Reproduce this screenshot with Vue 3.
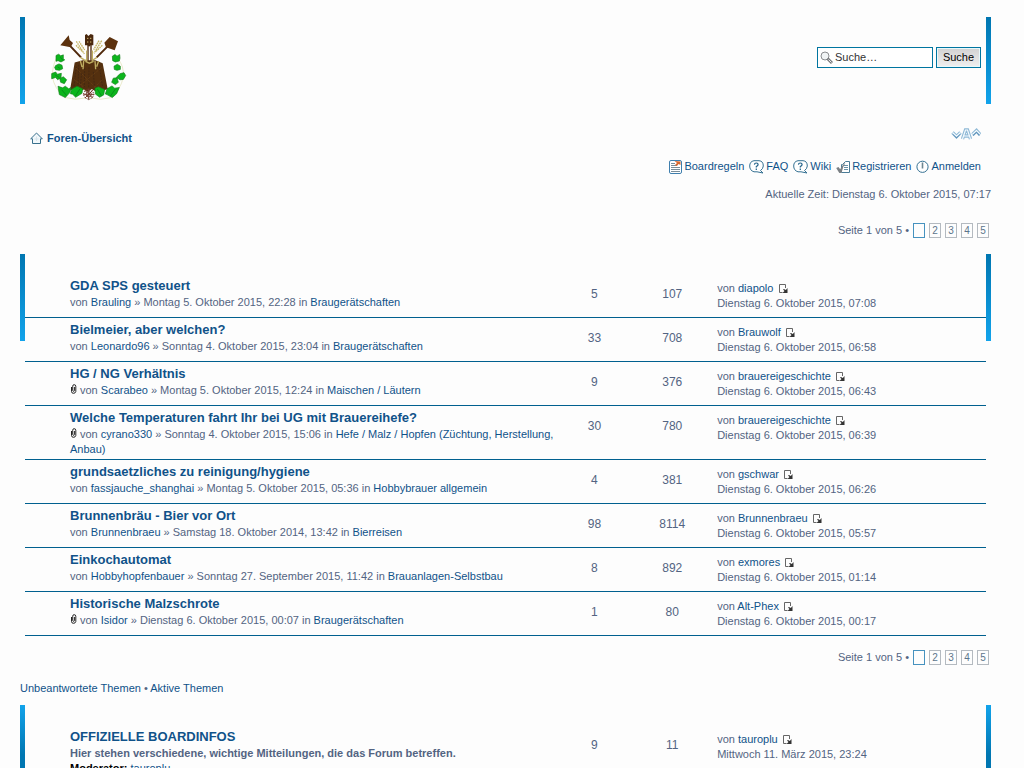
<script setup>
const topics = [
  { title: 'GDA SPS gesteuert', author: 'Brauling', date: 'Montag 5. Oktober 2015, 22:28', forum: 'Braugerätschaften', replies: 5, views: 107, last: 'diapolo', lastDate: 'Dienstag 6. Oktober 2015, 07:08' },
  { title: 'Bielmeier, aber welchen?', author: 'Leonardo96', date: 'Sonntag 4. Oktober 2015, 23:04', forum: 'Braugerätschaften', replies: 33, views: 708, last: 'Brauwolf', lastDate: 'Dienstag 6. Oktober 2015, 06:58' },
  { title: 'HG / NG Verhältnis', clip: true, author: 'Scarabeo', date: 'Montag 5. Oktober 2015, 12:24', forum: 'Maischen / Läutern', replies: 9, views: 376, last: 'brauereigeschichte', lastDate: 'Dienstag 6. Oktober 2015, 06:43' },
  { title: 'Welche Temperaturen fahrt Ihr bei UG mit Brauereihefe?', clip: true, author: 'cyrano330', date: 'Sonntag 4. Oktober 2015, 15:06', forum: 'Hefe / Malz / Hopfen (Züchtung, Herstellung, Anbau)', replies: 30, views: 780, last: 'brauereigeschichte', lastDate: 'Dienstag 6. Oktober 2015, 06:39' },
  { title: 'grundsaetzliches zu reinigung/hygiene', author: 'fassjauche_shanghai', date: 'Montag 5. Oktober 2015, 05:36', forum: 'Hobbybrauer allgemein', replies: 4, views: 381, last: 'gschwar', lastDate: 'Dienstag 6. Oktober 2015, 06:26' },
  { title: 'Brunnenbräu - Bier vor Ort', author: 'Brunnenbraeu', date: 'Samstag 18. Oktober 2014, 13:42', forum: 'Bierreisen', replies: 98, views: 8114, last: 'Brunnenbraeu', lastDate: 'Dienstag 6. Oktober 2015, 05:57' },
  { title: 'Einkochautomat', author: 'Hobbyhopfenbauer', date: 'Sonntag 27. September 2015, 11:42', forum: 'Brauanlagen-Selbstbau', replies: 8, views: 892, last: 'exmores', lastDate: 'Dienstag 6. Oktober 2015, 01:14' },
  { title: 'Historische Malzschrote', clip: true, author: 'Isidor', date: 'Dienstag 6. Oktober 2015, 00:07', forum: 'Braugerätschaften', replies: 1, views: 80, last: 'Alt-Phex', lastDate: 'Dienstag 6. Oktober 2015, 00:17' }
]
const forums = [
  { title: 'OFFIZIELLE BOARDINFOS', text: 'Hier stehen verschiedene, wichtige Mitteilungen, die das Forum betreffen.', moderator: 'tauroplu', topics: 9, posts: 11, last: 'tauroplu', lastDate: 'Mittwoch 11. März 2015, 23:24' }
]
const pages = [2, 3, 4, 5]
</script>

<template>
  <div class="page">
    <header class="banner">
      <a href="#" class="logo" aria-label="Foren-Übersicht">
        <svg width="85" height="75" viewBox="0 0 255 225">
          <path d="M34 85 Q22 108 22 140 Q28 175 58 202 Q90 212 123 204 M218 85 Q238 108 235 142 Q226 180 198 203 Q165 212 138 204" fill="none" stroke="#dfe0b0" stroke-width="2" />
          <g stroke="#50290c" fill="none" stroke-width="6">
            <path d="M66 38 108 82M196 41 155 82" />
            <path d="M129 44V98M138 44V98" stroke-width="4" />
          </g>
          <path d="M46 46 71 16 74 30 84 39 77 52ZM194 21 219 34 209 61 183 52 178 38Z" fill="#5c310d" />
          <path d="M120 46V15L125 12 130 18 137 12 145 15V46H137L132 50 128 46Z" fill="#4a280e" />
          <path d="M126 25h4M135 25h4M126 36h4M135 36h4" stroke="#d4bd74" stroke-width="3" />
          <g stroke="#c4b363" fill="none" stroke-width="4" stroke-dasharray="5 2">
            <path d="M94 34 118 72M102 34 119 60M170 32 147 70M162 32 146 59M93 46 111 64M172 46 153 64" />
          </g>
          <g transform="translate(0 8) scale(1 1.12)">
            <path d="M89 80 113 74 151 74 173 82 188 151 172 156 164 150 154 158 140 151 129 159 117 152 103 157 91 151 75 154Z" fill="#54300f" />
            <path d="M94 91 87 145M101 86 99 148M110 108 105 150M119 95 118 151M132 93 131 151M145 105 149 151M163 91 173 146" fill="none" stroke="#3c2412" stroke-width="2" stroke-dasharray="5 3" />
            <path d="M93 95 151 146M169 94 99 146M87 125 118 147M171 126 146 149" stroke="#754819" stroke-width="2" stroke-dasharray="3 3" />
            <path d="M106 66 118 73 125 74V48M142 48V74L156 66M116 76 114 98M150 76 152 98M106 75 111 92M161 76 155 91M121 77 133 82 146 77" fill="none" stroke="#bfae62" stroke-width="4" />
          </g>
          <g transform="translate(0 28) scale(1 .97)">
            <g fill="#0cb61c" stroke="#147f1b" stroke-width="2">
              <path d="M33 50 41 46 47 51 55 48 55 59 59 64 48 70 39 66 33 68ZM202 52 210 47 216 52 224 47 225 58 223 67 211 70 203 66Z" />
              <path d="M32 81 42 76 51 80 53 91 43 96 32 94 29 87ZM207 83 217 77 226 83 226 93 216 96 208 93Z" />
              <path d="M20 106 32 101 37 108 49 105 48 118 38 125 32 118 20 122ZM44 121 55 116 65 125 58 137 47 133ZM226 106 237 103 242 112 235 124 225 125 214 118 220 111ZM205 120 216 119 220 133 211 140 200 133Z" />
              <path d="M39 145 53 150 61 145 71 153 78 149 75 164 61 180 43 171ZM80 154 96 145 113 153 111 167 92 179 83 170 76 168ZM150 151 160 147 179 155 176 172 164 179 151 169ZM186 153 201 144 209 151 223 149 215 168 202 180 186 171 181 169Z" />
            </g>
            <path d="M46 55 53 64M38 85 46 91M29 109 43 118M50 156 65 174M105 153 91 175M157 154 169 174M211 154 196 176" stroke="#087918" fill="none" stroke-width="2" />
          </g>
          <g fill="none" stroke="#713a2c" stroke-width="3">
            <path d="M120 181 143 204M143 181 120 204M115 193H147M131 177V209" />
            <circle cx="131" cy="193" r="8" />
            <path d="M121 181 131 176 142 182 147 193 142 203 131 209 120 203 115 193Z" stroke-dasharray="4 3" />
          </g>
        </svg>
      </a>
      <form class="search" @submit.prevent>
        <label class="field">
          <svg width="13" height="14" viewBox="0 0 13 14"><circle cx="5" cy="5" r="4" fill="#f1f4f5" stroke="#8b8d90" /><path d="M7.5 7.5 12 12" stroke="#77797c" stroke-width="3" /><path d="M8.5 8.5 11.5 11.5" stroke="#eee" /></svg>
          <input type="text" value="Suche…" aria-label="Suche">
        </label>
        <button type="submit">Suche</button>
      </form>
    </header>

    <div class="crumbs">
      <a href="#" class="home">
        <svg width="13" height="13" viewBox="0 0 13 13"><path d="M6.5 1 12.3 6.8H10.5V11.5H2.5V6.8H.7Z" fill="#f2f8fb" stroke="#39718d" stroke-linejoin="round" /><path d="M6.5 4.5V9M4.5 7h4" stroke="#d4e3eb" /></svg>
        <b>Foren-Übersicht</b>
      </a>
      <a href="#" class="fontsize" aria-label="Schriftgröße ändern">
        <svg width="30" height="14" viewBox="0 0 30 14"><g fill="none"><path d="M1.5 5.5 5.5 9.5 9.5 5.5M21.5 7.5 25.5 3.5 29 7.5M11.5 12 14.5 3H16.5L19.5 12M13 9H18" stroke="#8fb9d6" stroke-width="3.4" /><path d="M2 7 5.5 10.5 9 7M22 8.5 25.5 5 28.5 8.5" stroke="#5e93ba" stroke-width="1.4" /><path d="M1.5 5.5 5.5 9.2 9.5 5.5M21.5 7.2 25.5 3.5 29 7.2M11.5 12 14.5 3H16.5L19.5 12M13 9H18" stroke="#f5fbff" stroke-width="1.2" /></g></svg>
      </a>
    </div>

    <nav class="links">
      <a href="#"><svg width="13" height="14" viewBox="0 0 13 14"><rect x=".5" y=".5" width="12" height="13" rx="1.5" fill="#fff" stroke="#3f7fae" /><path d="M2 3.5h4M2 5.5h6M2 7.5h9M2 9.5h9M2 11.5h9" stroke="#7a8d99" /><path d="m5.5 1 6 .5V5L9.5 4 8 6 6 5l2-2Z" fill="#d9682f" /></svg><span>Boardregeln</span></a>
      <a href="#"><svg width="15" height="14" viewBox="0 0 15 14"><path d="M5 .7h5Q14.3 1 14.3 6 14 9 11.5 10.5L14 13 8 11.8H5Q.7 10.5.7 6T5 .7Z" fill="#fff" stroke="#347092" /><path d="M5.4 4.6Q5.6 3 7.3 3 9.1 3 9.1 4.5 9.1 5.6 7.3 6.6V7.4M7.3 8.5V10" fill="none" stroke="#1f6088" stroke-width="1.2" /></svg><span>FAQ</span></a>
      <a href="#"><svg width="15" height="14" viewBox="0 0 15 14"><path d="M5 .7h5Q14.3 1 14.3 6 14 9 11.5 10.5L14 13 8 11.8H5Q.7 10.5.7 6T5 .7Z" fill="#fff" stroke="#347092" /><path d="M5.4 4.6Q5.6 3 7.3 3 9.1 3 9.1 4.5 9.1 5.6 7.3 6.6V7.4M7.3 8.5V10" fill="none" stroke="#1f6088" stroke-width="1.2" /></svg><span>Wiki</span></a>
      <a href="#"><svg width="14" height="14" viewBox="0 0 14 14"><path d="M6.5 4.5 9.5 1.5H13.5V12.5H5.5V4.5Z" fill="#fff" stroke="#4a7c97" /><path d="M8 5.5h4M8 7.5h4M8 9.5h4" stroke="#6a91a7" /><path d="M.2 8 2.5 7 4.2 9.2Q6 5 9.5 2.5 7 6.5 5.4 13H3.3Z" fill="#7b8084" /></svg><span>Registrieren</span></a>
      <a href="#"><svg width="13" height="14" viewBox="0 0 13 14"><circle cx="6.5" cy="6.8" r="5.6" fill="#fff" stroke="#347092" /><path d="M6.5 2.5V8.5" stroke="#6e8792" stroke-width="1.6" /></svg><span>Anmelden</span></a>
    </nav>

    <p class="time">Aktuelle Zeit: Dienstag 6. Oktober 2015, 07:17</p>

    <div class="pagination top">
      <span>Seite 1 von 5 •</span><b class="current" /><a v-for="p in pages" :key="p" href="#">{{ p }}</a>
    </div>

    <section class="panel">
      <table>
        <colgroup><col><col class="count"><col class="count"><col class="lastpost"></colgroup>
        <tbody>
          <tr v-for="t in topics" :key="t.title">
            <td class="topic">
              <a href="#" class="title">{{ t.title }}</a>
              <p><svg v-if="t.clip" class="clip" width="7" height="10" viewBox="0 0 7 10"><path d="M1.5 3V7.5Q1.5 9.3 3.5 9.3T5.8 7.5V2.3Q5.8.7 4.2.7T2.7 2.3V6.5Q2.8 7.5 3.7 7.3T4.4 6.5V3" fill="none" stroke="#252525" /></svg>von <a href="#">{{ t.author }}</a> » {{ t.date }} in <a href="#">{{ t.forum }}</a></p>
            </td>
            <td class="number">{{ t.replies }}</td>
            <td class="number">{{ t.views }}</td>
            <td class="last">von <a href="#">{{ t.last }}</a> <a href="#" aria-label="Neuester Beitrag"><svg class="goto" width="9" height="9" viewBox="0 0 9 9"><path d="M3.5 8.5H.5V.5H6.5V4" fill="none" stroke="#666" /><path d="M8.5 4V9H3.5L5.5 7 4 5.5 5 5 6.8 6Z" fill="#333" /></svg></a><br>{{ t.lastDate }}</td>
          </tr>
        </tbody>
      </table>
    </section>

    <div class="pagination bottom">
      <span>Seite 1 von 5 •</span><b class="current" /><a v-for="p in pages" :key="p" href="#">{{ p }}</a>
    </div>

    <p class="quick"><a href="#">Unbeantwortete Themen</a> • <a href="#">Aktive Themen</a></p>

    <section class="panel forums">
      <table>
        <colgroup><col><col class="count"><col class="count"><col class="lastpost"></colgroup>
        <tbody>
          <tr v-for="f in forums" :key="f.title">
            <td class="topic">
              <a href="#" class="title">{{ f.title }}</a>
              <p><b>{{ f.text }}</b></p>
              <p><b class="mod">Moderator:</b> <a href="#">{{ f.moderator }}</a></p>
            </td>
            <td class="number">{{ f.topics }}</td>
            <td class="number">{{ f.posts }}</td>
            <td class="last">von <a href="#">{{ f.last }}</a> <a href="#" aria-label="Neuester Beitrag"><svg class="goto" width="9" height="9" viewBox="0 0 9 9"><path d="M3.5 8.5H.5V.5H6.5V4" fill="none" stroke="#666" /><path d="M8.5 4V9H3.5L5.5 7 4 5.5 5 5 6.8 6Z" fill="#333" /></svg></a><br>{{ f.lastDate }}</td>
          </tr>
        </tbody>
      </table>
    </section>
  </div>
</template>

<style>
body {
  background: #fdfdfd;
}
</style>

<style scoped>
.page {
  padding: 17px 33px 0 20px;
  font: 11px/15px "Liberation Sans", Arial, sans-serif;
  color: #536482;
}
a {
  color: #105289;
  text-decoration: none;
}
a:hover {
  text-decoration: underline;
}
p {
  margin: 0;
}
.banner,
.panel {
  background:
    linear-gradient(#0076b1, #12a3eb) left top / 5px 87px no-repeat,
    linear-gradient(#0076b1, #12a3eb) right top / 5px 87px no-repeat;
}
.banner {
  display: flex;
  justify-content: space-between;
  align-items: flex-start;
  height: 87px;
  padding: 0 10px 0 25px;
  box-sizing: border-box;
}
.logo {
  padding-top: 13px;
}
.logo svg,
.links svg,
.home svg,
.fontsize svg {
  display: block;
}
.search {
  display: flex;
  gap: 3px;
  padding-top: 30px;
}
.field {
  display: flex;
  align-items: center;
  gap: 2px;
  width: 116px;
  height: 21px;
  padding: 0 2px;
  box-sizing: border-box;
  border: 1px solid #0075a0;
  background: #fff;
}
.field input {
  flex: 1;
  min-width: 0;
  padding: 0;
  border: 0;
  outline: 0;
  background: none;
  font: inherit;
  color: #333;
}
.search button {
  width: 45px;
  height: 21px;
  padding: 0;
  border: 1px solid #0075a0;
  background: linear-gradient(#d2d2d2, #efefef);
  box-shadow: inset 0 0 0 1px #e8f8fb;
  font: inherit;
  color: #000;
}
.crumbs {
  display: flex;
  justify-content: space-between;
  align-items: flex-start;
  padding: 23px 10px 0;
}
.home {
  display: flex;
  align-items: center;
  gap: 4px;
  padding-top: 4px;
}
.links {
  display: flex;
  justify-content: flex-end;
  gap: 5px;
  padding: 13px 10px 0 0;
}
.links a {
  display: flex;
  align-items: center;
  gap: 2px;
}
.time {
  margin-top: 13px;
  text-align: right;
}
.pagination {
  display: flex;
  justify-content: flex-end;
  align-items: center;
  gap: 4px;
  padding-right: 2px;
}
.pagination.top {
  margin: 21px 0 16px;
}
.pagination.bottom {
  margin: 14px 0 16px;
}
.pagination a,
.pagination b {
  width: 12px;
  height: 15px;
  box-sizing: border-box;
  border: 1px solid #b4bac0;
  font-size: 10px;
  line-height: 14px;
  text-align: center;
  color: #5c758c;
}
.pagination .current {
  border-color: #4692bf;
}
.panel {
  padding: 20px 5px 0;
}
table {
  width: 100%;
  border-collapse: separate;
  border-spacing: 0;
  table-layout: fixed;
}
.count {
  width: 8.1%;
}
.lastpost {
  width: 28.6%;
}
td {
  height: 44px;
  box-sizing: border-box;
  padding: 0;
  vertical-align: top;
  border-bottom: 1px solid #00608f;
}
td.topic {
  padding: 3px 0 2px 45px;
}
.title {
  display: block;
  font-size: 13px;
  font-weight: bold;
  line-height: 18px;
}
td.number {
  padding-top: 13px;
  font-size: 12px;
  text-align: center;
}
td.last {
  padding: 7px 0 0 6px;
}
.clip {
  margin-right: 3px;
}
.goto {
  margin-left: 2px;
  vertical-align: -1px;
}
.forums {
  margin-top: 9px;
  background:
    linear-gradient(#12a3eb, #0076b1 50px) left top / 5px 87px no-repeat,
    linear-gradient(#12a3eb, #0076b1 50px) right top / 5px 87px no-repeat;
}
.mod {
  color: #000;
}
</style>
